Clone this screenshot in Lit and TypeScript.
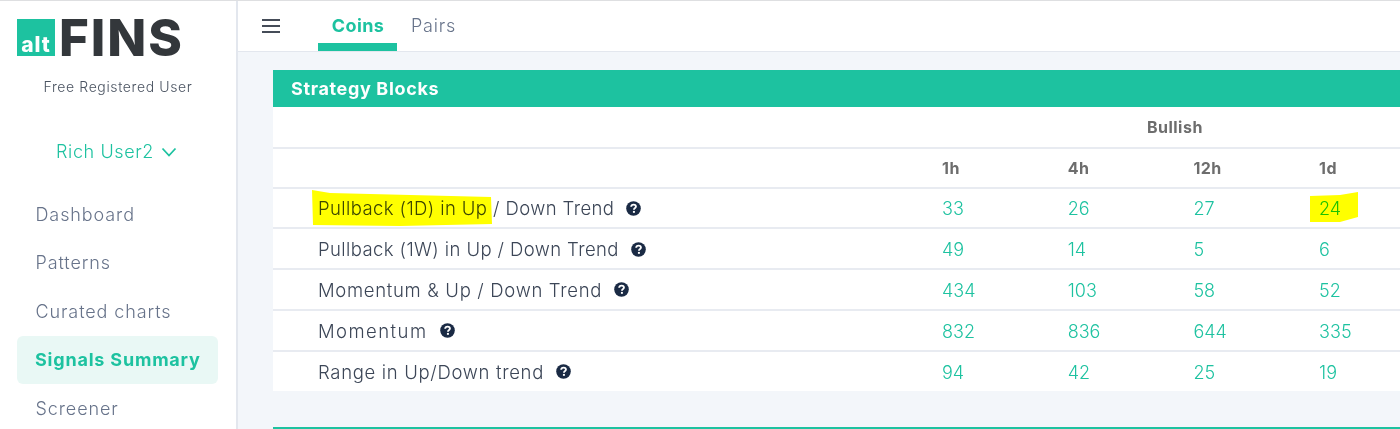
import { LitElement, html, css, svg } from "lit";
import { customElement } from "lit/decorators.js";

const rows: [string, string, string[]][] = [
  ["Pullback (1D) in Up / Down Trend", "t0", ["33", "26", "27", "24"]],
  ["Pullback (1W) in Up / Down Trend", "t0", ["49", "14", "5", "6"]],
  ["Momentum & Up / Down Trend", "t1", ["434", "103", "58", "52"]],
  ["Momentum", "t2", ["832", "836", "644", "335"]],
  ["Range in Up/Down trend", "t1", ["94", "42", "25", "19"]],
];
const nav = ["Dashboard", "Patterns", "Curated charts", "Signals Summary", "Screener"];

const help = html`<svg class="help" viewBox="0 0 16 16" aria-hidden="true">
  <circle cx="8" cy="8" r="7.8" fill="#1a2a44"></circle>
  <path d="M5.5 6.2c.1-1.5 1.2-2.4 2.6-2.4 1.4 0 2.5.9 2.5 2.1 0 1.1-.7 1.5-1.3 1.9-.6.4-.8.7-.8 1.4" fill="none" stroke="#fff" stroke-width="2"></path>
  <rect x="7.4" y="10.6" width="2.1" height="2" fill="#fff"></rect>
</svg>`;

@customElement("app-root")
export class AppRoot extends LitElement {
  static styles = css`
    :host {
      display: block;
      width: 1400px;
      height: 429px;
      overflow: hidden;
      position: relative;
      background: #f3f6fa;
      font-family: Inter, "Liberation Sans", sans-serif;
      color: #3c4657;
    }
    .shell { display: flex; height: 429px; border-top: 1px solid #dedfe1; box-sizing: border-box; }
    .side {
      width: 236px; flex: none; background: #fff; border-right: 2px solid #e3e7ee;
      display: flex; flex-direction: column; align-items: stretch; box-sizing: content-box;
    }
    .logo { display: flex; align-items: center; margin: 18px 0 0 17px; height: 37px; gap: 4px; }
    .alt {
      width: 38px; height: 37px; background: #1dc2a0; color: #fff; font-weight: 800; font-size: 21px; letter-spacing: 1px;
      display: flex; align-items: flex-end; justify-content: center; line-height: 20px; box-sizing: border-box; padding-bottom: 1px;
    }
    .fins { font-size: 51px; font-weight: 800; line-height: 37px; color: #33373b; letter-spacing: 1.9px; }
    .role { margin-top: 22px; text-align: center; font-size: 14px; letter-spacing: 0.62px; line-height: 18px; color: #4a5361; font-weight: 350; }
    .user { margin-top: 45px; padding-right: 3px; display: flex; justify-content: center; align-items: center; gap: 7px; font-size: 18px; letter-spacing: 0.6px; line-height: 22px; color: #1dc2a0; font-weight: 350; }
    .user svg { width: 16px; height: 10px; }
    .menu { margin: 27px 18px 0 17px; display: flex; flex-direction: column; }
    .item { height: 48.5px; flex: none; display: flex; align-items: center; padding-left: 18.5px; font-size: 18px; letter-spacing: 0.9px; color: #67738a; border-radius: 6px; font-weight: 350; }
    .item.on { background: #e9f8f5; color: #1dc2a0; font-weight: 700; letter-spacing: 0.8px; padding-left: 18px; }
    .main { flex: 1; min-width: 0; display: flex; flex-direction: column; }
    .top { height: 50px; background: #fff; border-bottom: 1px solid #e3e7ee; display: flex; flex: none; align-items: stretch; }
    .burger { width: 18px; height: 14px; margin: 18px 38px 0 24px; display: flex; flex-direction: column; justify-content: space-between; }
    .burger i { display: block; height: 2px; background: #454c58; }
    .tab { display: flex; align-items: center; justify-content: center; font-size: 18px; letter-spacing: 0.8px; box-sizing: border-box; padding-bottom: 1px; color: #67738a; font-weight: 350; }
    .tab.on { width: 79px; color: #1dc2a0; font-weight: 700; letter-spacing: 0.4px; border-bottom: 8px solid #1dc2a0; padding-top: 7px; padding-left: 1px; }
    .tab.off { margin-left: 14px; }
    .content { padding: 18px 0 0 35px; display: flex; flex-direction: column; width: 1200px; }
    .card { background: #fff; width: 1160px; }
    .head { height: 37px; background: #1dc2a0; color: #fff; font-weight: 700; font-size: 18px; letter-spacing: 0.65px; display: flex; align-items: center; padding-left: 18px; }
    .row { display: grid; grid-template-columns: 669px repeat(4, 125.7px); align-items: center; border-bottom: 2px solid #e8ebf1; height: 40.8px; box-sizing: border-box; font-size: 18px; font-weight: 350; }
    .row:last-child { border-bottom: 0; height: 39.5px; }
    .th { font-size: 16px; font-weight: 700; color: #6d6d6d; height: 39.5px; letter-spacing: 0.5px; }
    .th.first { height: 42px; }
    .span { grid-column: 2 / span 4; text-align: center; padding-right: 37px; }
    .label { padding-left: 45px; padding-top: 1px; display: flex; align-items: center; gap: 12px; color: #3c4657; font-size: 18.5px; }
    .t0 { letter-spacing: 0.4px; }
    .t1 { letter-spacing: 0.68px; }
    .t2 { letter-spacing: 1.45px; }
    .num { color: #1dc2a0; padding-top: 2px; }
    .help { width: 15px; height: 15px; flex: none; }
    .next { margin-top: 36px; width: 1160px; height: 2px; background: #1dc2a0; flex: none; }
    .marks { position: absolute; left: 0; top: 0; width: 1400px; height: 429px; pointer-events: none; mix-blend-mode: multiply; }
  `;

  render() {
    return html`
      <div class="shell">
        <aside class="side">
          <div class="logo"><div class="alt">alt</div><div class="fins">FINS</div></div>
          <div class="role">Free Registered User</div>
          <div class="user">Rich User2
            <svg viewBox="0 0 16 10"><path d="M1.5 1.5 8 8.5l6.5-7" fill="none" stroke="#1dc2a0" stroke-width="1.8"></path></svg>
          </div>
          <nav class="menu">
            ${nav.map((n) => html`<div class="item ${n === "Signals Summary" ? "on" : ""}">${n}</div>`)}
          </nav>
        </aside>
        <div class="main">
          <header class="top">
            <div class="burger"><i></i><i></i><i></i></div>
            <div class="tab on">Coins</div>
            <div class="tab off">Pairs</div>
          </header>
          <div class="content">
            <section class="card">
              <div class="head">Strategy Blocks</div>
              <div class="row th first"><div></div><div class="span">Bullish</div></div>
              <div class="row th"><div></div><div>1h</div><div>4h</div><div>12h</div><div>1d</div></div>
              ${rows.map(([label, cls, vals]) => html`<div class="row">
                <div class="label"><span class=${cls}>${label}</span>${help}</div>
                ${vals.map((v) => html`<div class="num">${v}</div>`)}
              </div>`)}
            </section>
            <div class="next"></div>
          </div>
        </div>
      </div>
      <svg class="marks" viewBox="0 0 1400 429">
        ${svg`<path fill="#ffff00" d="M312 190 L330 193 L491 197 L492 224 L400 226 L313 225 Z"></path>
        <path fill="#ffff00" d="M1310 196 L1340 195 L1358 192 L1358 217 L1340 222 L1310 222 Z"></path>`}
      </svg>
    `;
  }
}
